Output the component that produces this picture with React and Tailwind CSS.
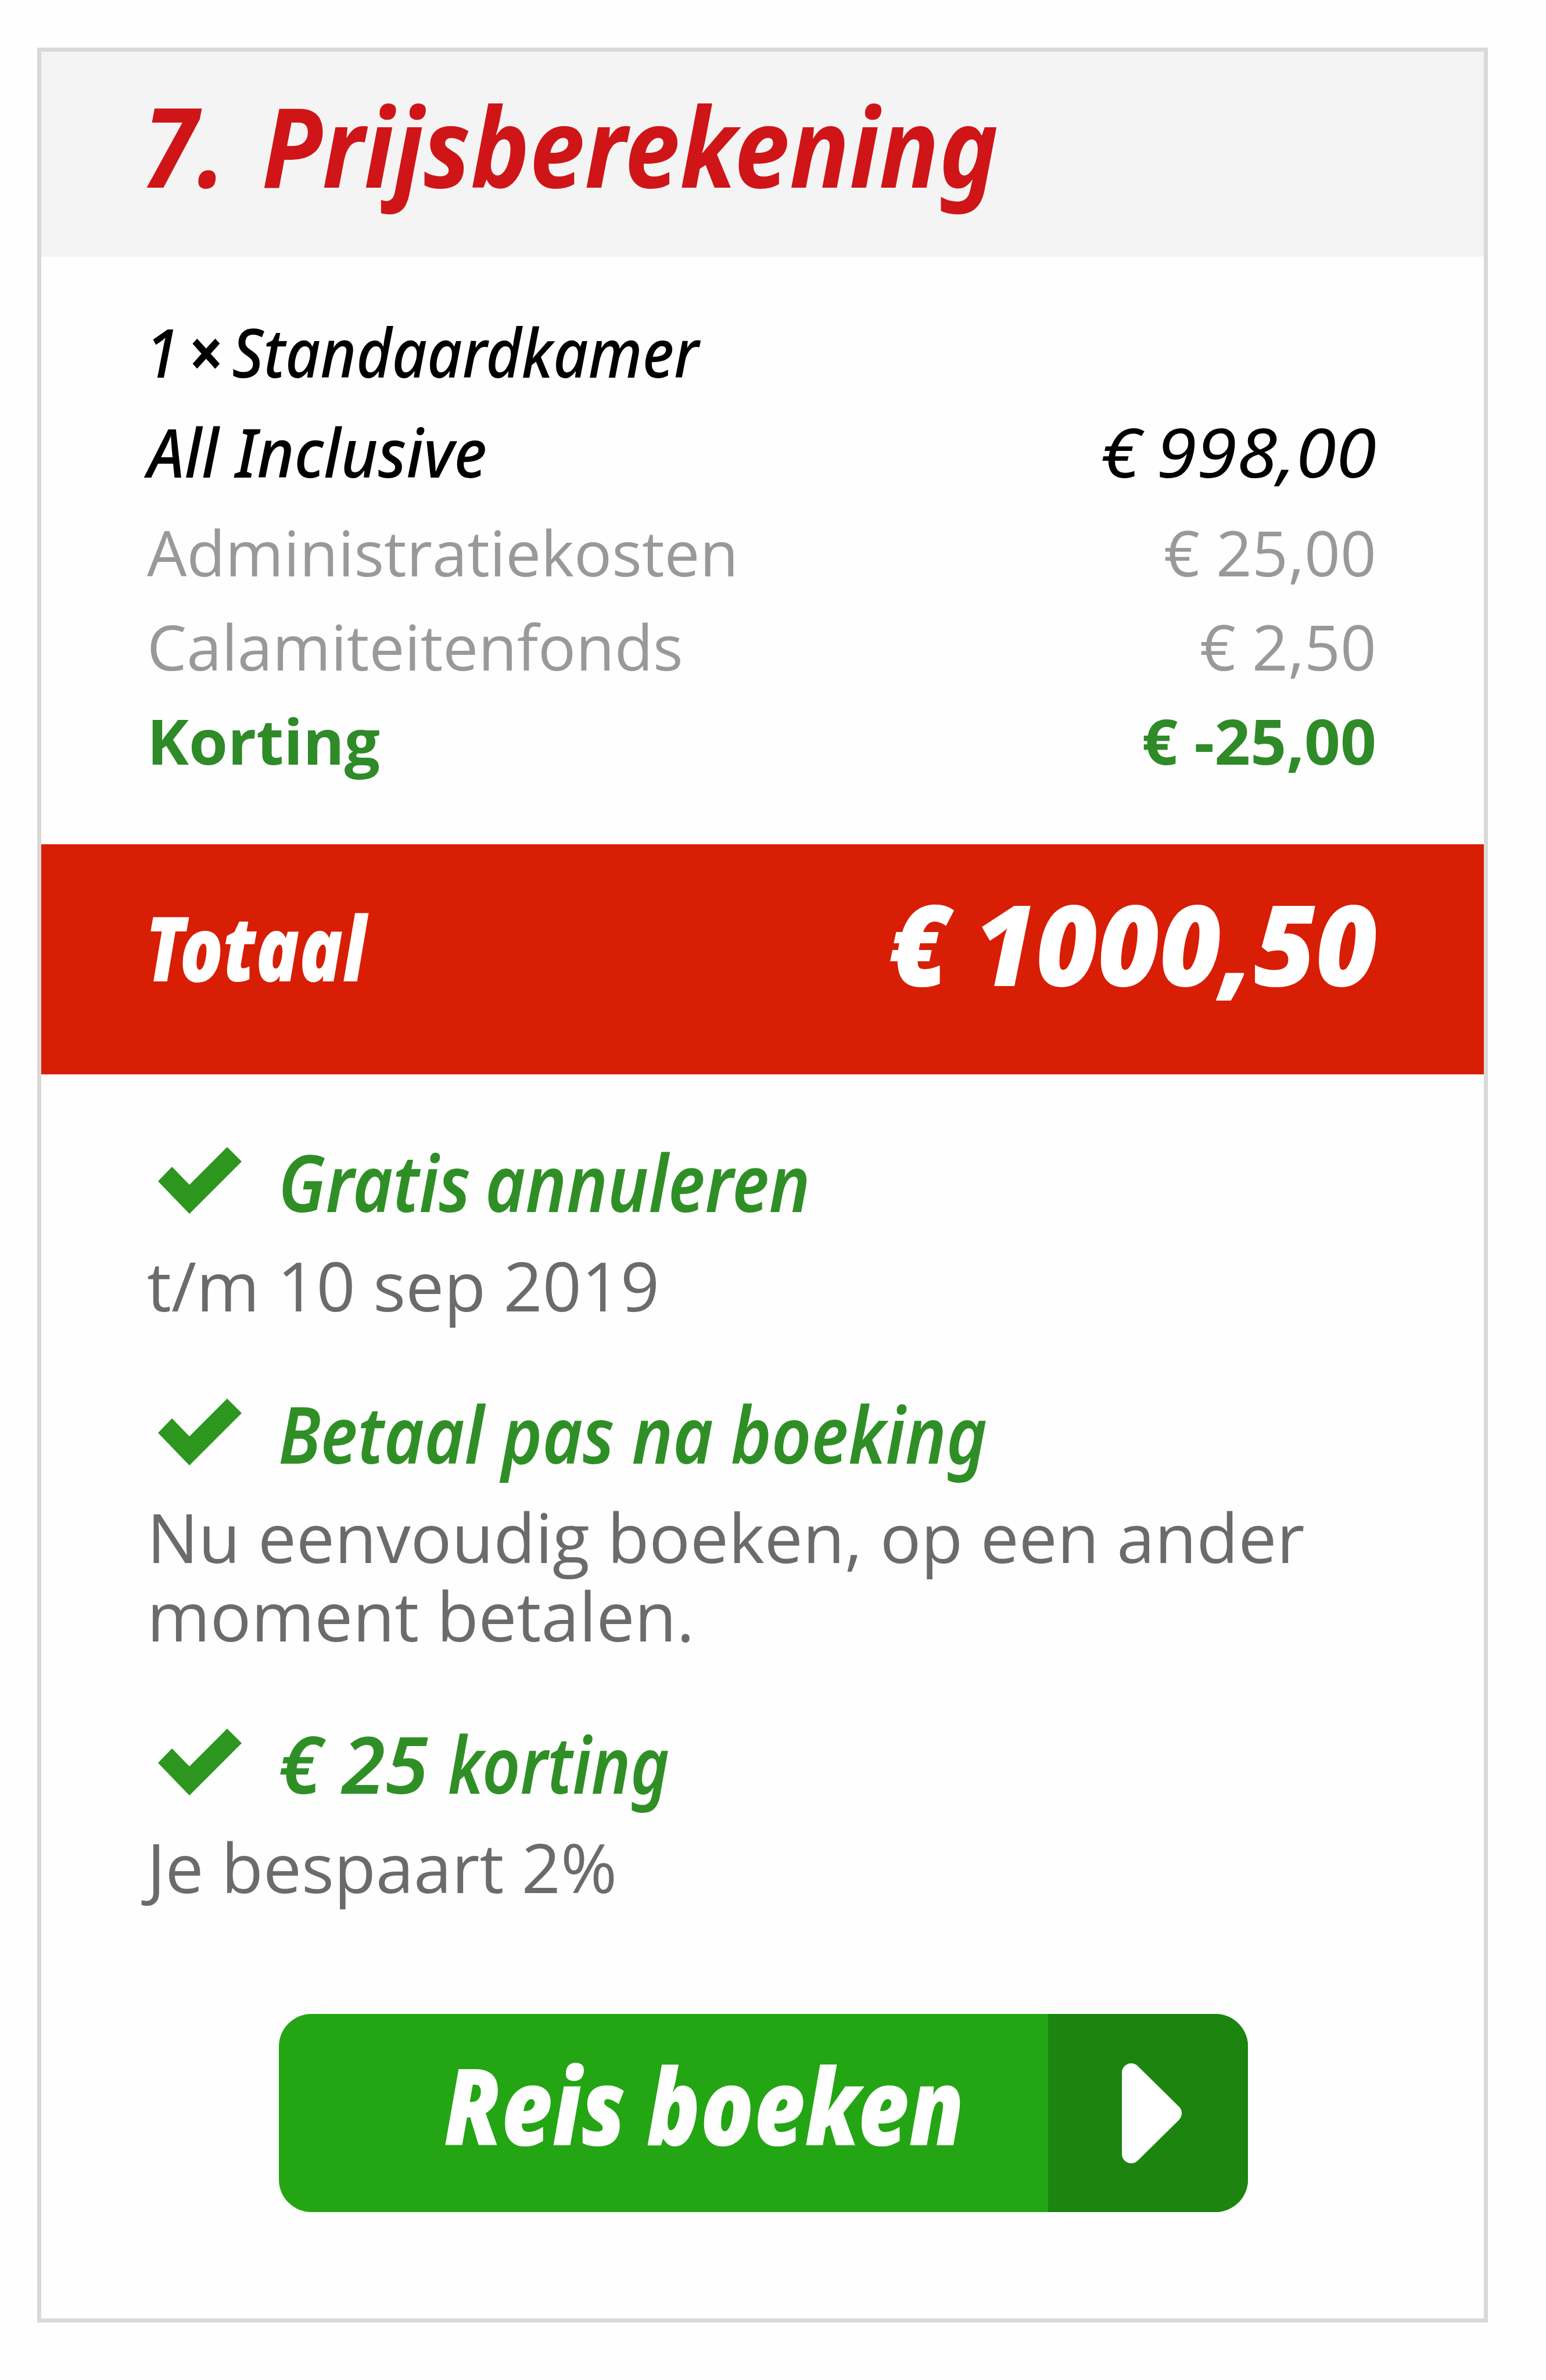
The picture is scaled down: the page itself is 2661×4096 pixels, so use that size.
import React from 'react';

const priceRows = [
  { id: 1, label: 'Administratiekosten', price: '€ 25,00' },
  { id: 2, label: 'Calamiteitenfonds', price: '€ 2,50' },
];

const CheckIcon = () => (
  <svg className="w-[144px] h-[116px] shrink-0" viewBox="0 0 144 116" fill="#2c961f">
    <path d="M0 59 L24 34 L54 65 L119 0 L144 25 L54 115 Z" />
  </svg>
);

const Feature = ({ title, titleClass, children }) => (
  <div>
    <div className="flex items-center h-[180px] pl-[19px] gap-[63px]">
      <CheckIcon />
      <h3 className={`pt-[3px] text-[136px] leading-[180px] italic font-semibold text-[#2f8f26] whitespace-nowrap origin-left ${titleClass}`}>
        {title}
      </h3>
    </div>
    <p className="mt-[22px] font-['Open_Sans',sans-serif] text-[117.5px] leading-[135px] text-[#6b6b6b]">{children}</p>
  </div>
);

const App = () => {
  return (
    <div className="w-[2661px] h-[4096px] bg-[#fefefe] pt-[82px] pl-[64px] font-['Noto_Sans',sans-serif]">
      <div className="w-[2497px] h-[3915px] border-[7px] border-[#d9d9d9] bg-[#fefefe]">
        <div className="h-[353px] pb-8 pl-[175px] flex items-center bg-[#f4f4f4]">
          <h2 className="text-[191px] leading-none italic font-bold text-[#cf1517] whitespace-nowrap origin-left scale-x-[0.894] [word-spacing:19px]">
            7. Prijsberekening
          </h2>
        </div>

        <div className="pt-[77px] pb-[98px] pl-[182px] pr-[185px]">
          <div className="text-[117px] leading-[172px] italic font-medium text-black">
            <div className="w-fit whitespace-nowrap origin-left scale-x-[0.9] [word-spacing:-13px] -ml-[3px]">
              1 <b>×</b> Standaardkamer
            </div>
            <div className="flex justify-between">
              <span className="origin-left scale-x-[0.935] ml-px">All Inclusive</span>
              <span className="origin-right scale-x-[1.075] font-normal [word-spacing:-5px]">€ 998,00</span>
            </div>
          </div>
          <div className="mt-[6px] font-['Open_Sans',sans-serif] text-[108.4px] leading-[162px] text-[#999]">
            {priceRows.map(row => (
              <div key={row.id} className="flex justify-between">
                <span>{row.label}</span>
                <span>{row.price}</span>
              </div>
            ))}
            <div className="flex justify-between font-bold text-[#2f8a28]">
              <span>Korting</span>
              <span>€ -25,00</span>
            </div>
          </div>
        </div>

        <div className="h-[396px] pb-[50px] pl-[179px] pr-[183px] flex items-center justify-between bg-[#d81e05] text-white italic">
          <span className="text-[154px] leading-none font-black origin-left scale-x-[0.8] pt-[5px]">Totaal</span>
          <span className="text-[193px] leading-none font-black origin-right scale-x-[0.95] pb-2 [word-spacing:-5px]">€ 1000,50</span>
        </div>

        <div className="pt-[93px] pl-[182px] flex flex-col gap-[96px]">
          <Feature title="Gratis annuleren" titleClass="scale-x-[0.873] [word-spacing:-6px]">t/m 10 sep 2019</Feature>
          <Feature title="Betaal pas na boeking" titleClass="scale-x-[0.875] [word-spacing:-1px]">
            Nu eenvoudig boeken, op een ander<br />moment betalen.
          </Feature>
          <Feature
            title={<><span className="inline-block origin-left scale-x-[1.19] mr-[54px]">€ 25</span> korting</>}
            titleClass="scale-x-[0.835]"
          >
            Je bespaart 2%
          </Feature>
        </div>

        <button className="mt-[186px] ml-[409px] w-[1668px] h-[341px] flex rounded-[56px] overflow-hidden bg-[#24a514] text-white">
          <span className="w-[1324px] h-full pl-[284px] pb-8 flex items-center">
            <span className="text-[182px] leading-none italic font-black whitespace-nowrap origin-left scale-x-[0.836] [word-spacing:-4px]">Reis boeken</span>
          </span>
          <span className="flex-1 h-full pl-[127px] flex items-center bg-[#1b850f]">
            <svg className="w-[104px] h-[174px]" viewBox="0 0 104 174" fill="currentColor" stroke="currentColor" strokeWidth="32" strokeLinejoin="round">
              <path d="M16 17 L87 87 L16 157 Z" />
            </svg>
          </span>
        </button>
      </div>
    </div>
  );
};

export default App;
